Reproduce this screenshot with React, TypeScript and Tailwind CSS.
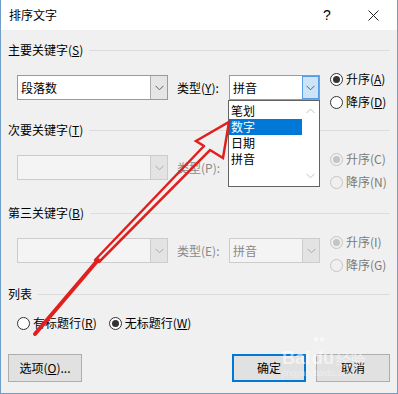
import React from 'react';

type Cbx = 'normal' | 'focus' | 'disabled';

function Chevron({ color }: { color: string }) {
  return (
    <svg width="9" height="6" viewBox="0 0 9 6">
      <path d="M0.5 0.8 L4.5 4.8 L8.5 0.8" fill="none" stroke={color} strokeWidth="1" />
    </svg>
  );
}

function Combo({ width, text, state = 'normal' }: { width: string; text?: string; state?: Cbx }) {
  const disabled = state === 'disabled';
  return (
    <div
      className={`flex h-[25px] border ${width} ${
        disabled ? 'border-[#cccccc] bg-[#f4f4f4]' : 'border-[#9a9a9a] bg-white'
      }`}
    >
      <div className={`flex-1 flex items-center pl-[3px] ${disabled ? 'text-[#8a8a8a]' : 'text-black'}`}>
        {text}
      </div>
      <div
        className={`w-[17px] flex items-center justify-center border-l ${
          state === 'focus'
            ? 'bg-[#cce4f7] border border-[#569de5]'
            : disabled
            ? 'bg-[#e3e3e3] border-[#cccccc]'
            : 'bg-[#e5e5e5] border-[#adadad]'
        }`}
      >
        <Chevron color={disabled ? '#a8a8a8' : '#606060'} />
      </div>
    </div>
  );
}

function Radio({ checked, disabled, children }: { checked?: boolean; disabled?: boolean; children: React.ReactNode }) {
  return (
    <div className={`flex items-center h-4 gap-[3px] ${disabled ? 'text-[#7a7a7a]' : 'text-black'}`}>
      <span
        className={`w-[13px] h-[13px] rounded-full border flex items-center justify-center ${
          disabled ? 'border-[#c4c4c4] bg-[#f0f0f0]' : 'border-[#333333] bg-white'
        }`}
      >
        {checked && (
          <span className={`w-[7px] h-[7px] rounded-full ${disabled ? 'bg-[#c4c4c4]' : 'bg-[#333333]'}`} />
        )}
      </span>
      <span>{children}</span>
    </div>
  );
}

function Heading({ children }: { children: React.ReactNode }) {
  return (
    <div className="flex items-center h-4 gap-[6px]">
      <span className="whitespace-nowrap">{children}</span>
      <div className="flex-1 h-px bg-[#dcdcdc]" />
    </div>
  );
}

function KeyRow({
  text,
  label,
  type,
  typeState,
  disabled,
  up,
  down,
}: {
  text?: string;
  label: React.ReactNode;
  type?: string;
  typeState: Cbx;
  disabled?: boolean;
  up: React.ReactNode;
  down: React.ReactNode;
}) {
  return (
    <div className="flex h-[40px] mt-[12px]">
      <div className="ml-[9px] mt-[5px]">
        <Combo width="w-[151px]" text={text} state={disabled ? 'disabled' : 'normal'} />
      </div>
      <div
        className={`ml-[9px] mt-[5px] h-[25px] w-[52px] flex items-center whitespace-nowrap ${
          disabled ? 'text-[#8a8a8a]' : 'text-black'
        }`}
      >
        {label}
      </div>
      <div className="mt-[5px]">
        <Combo width="w-[91px]" text={type} state={typeState} />
      </div>
      <div className="ml-[10px] mt-[1px] flex flex-col gap-[7px]">
        <Radio checked disabled={disabled}>
          {up}
        </Radio>
        <Radio disabled={disabled}>{down}</Radio>
      </div>
    </div>
  );
}

function Btn({ children, primary, width }: { children: React.ReactNode; primary?: boolean; width: string }) {
  return (
    <div
      className={`h-[28px] ${width} flex items-center justify-center bg-[#e1e1e1] ${
        primary ? 'border-2 border-[#0078d7]' : 'border border-[#adadad]'
      }`}
    >
      {children}
    </div>
  );
}

export default function App() {
  return (
    <div className="relative w-[398px] h-[394px] overflow-hidden bg-[#f0f0f0] border-x border-b border-[#6f9ec6] font-['Microsoft_YaHei','Noto_Sans_CJK_SC',sans-serif] text-[12px] text-black leading-none">
      {/* title bar */}
      <div className="h-[30px] bg-white flex items-center pl-[8px]">
        <span className="flex-1">排序文字</span>
        <span className="text-[14px] w-[10px] mr-[35px] font-['Liberation_Sans',sans-serif]">?</span>
        <svg width="11" height="11" viewBox="0 0 11 11" className="mr-[18px]">
          <path d="M0.5 0.5 L10.5 10.5 M10.5 0.5 L0.5 10.5" stroke="#222" strokeWidth="1" />
        </svg>
      </div>

      <div className="pl-[7px] pr-[7px] pt-[12px]">
        <Heading>
          主要关键字(<span className="underline">S</span>)
        </Heading>
        <KeyRow
          text="段落数"
          label={
            <>
              类型(<span className="underline">Y</span>):
            </>
          }
          type="拼音"
          typeState="focus"
          up={
            <>
              升序(<span className="underline">A</span>)
            </>
          }
          down={
            <>
              降序(<span className="underline">D</span>)
            </>
          }
        />

        <div className="mt-[12px]">
          <Heading>
            次要关键字(<span className="underline">T</span>)
          </Heading>
        </div>
        <KeyRow
          disabled
          label="类型(P):"
          typeState="disabled"
          up="升序(C)"
          down="降序(N)"
        />

        <div className="mt-[15px]">
          <Heading>
            第三关键字(<span className="underline">B</span>)
          </Heading>
        </div>
        <KeyRow
          disabled
          label="类型(E):"
          type="拼音"
          typeState="disabled"
          up="升序(I)"
          down="降序(G)"
        />

        <div className="mt-[13px]">
          <Heading>列表</Heading>
        </div>
        <div className="flex mt-[13px] ml-[9px] gap-[12px]">
          <Radio>
            有标题行(<span className="underline">R</span>)
          </Radio>
          <Radio checked>
            无标题行(<span className="underline">W</span>)
          </Radio>
        </div>

        <div className="flex mt-[23px]">
          <Btn width="w-[74px]">
            选项(<span className="underline">O</span>)...
          </Btn>
          <div className="flex-1" />
          <Btn width="w-[74px]" primary>
            确定
          </Btn>
          <div className="ml-[10px]">
            <Btn width="w-[74px]">取消</Btn>
          </div>
        </div>
      </div>

      {/* open dropdown list */}
      <div className="absolute left-[227px] top-[100px] w-[92px] h-[87px] bg-white border border-[#646464] flex">
        <div className="flex-1 pt-[2px] flex flex-col">
          <div className="h-4 flex items-center pl-[2px]">笔划</div>
          <div className="h-4 flex items-center pl-[2px] bg-[#0078d7] text-white">数字</div>
          <div className="h-4 flex items-center pl-[2px]">日期</div>
          <div className="h-4 flex items-center pl-[2px]">拼音</div>
        </div>
        <div className="w-[17px] flex flex-col items-center justify-between py-[7px]">
          <svg width="9" height="6" viewBox="0 0 9 6">
            <path d="M0.5 5 L4.5 1 L8.5 5" fill="none" stroke="#c2c2c2" strokeWidth="1" />
          </svg>
          <Chevron color="#c2c2c2" />
        </div>
      </div>

      {/* watermark */}
      <div className="absolute left-[281px] top-[349px] text-white/55 pointer-events-none">
        <div className="flex items-end gap-[2px] text-[18px] font-bold font-['Liberation_Sans',sans-serif] leading-none">
          <span>Bai</span>
          <span className="relative">
            <span className="absolute -top-[12px] left-[2px] flex gap-[2px]">
              <span className="w-[4px] h-[5px] rounded-full bg-white/50" />
              <span className="w-[4px] h-[5px] rounded-full bg-white/50" />
            </span>
            du
          </span>
          <span className="text-[15px] font-normal">经验</span>
        </div>
        <div className="text-[9px] font-['Liberation_Sans',sans-serif] mt-[2px] text-white/45">jingyan.baidu.com</div>
      </div>

      {/* red annotation arrow */}
      <svg className="absolute left-0 top-0 pointer-events-none" width="398" height="394" viewBox="0 0 398 394">
        <g fill="none" stroke="#e0201e" strokeLinejoin="miter" strokeLinecap="round">
          <path
            d="M203 146 L195 141 L228 122 L222 158 L209 150 L98 262 M203 146 L94 260"
            strokeWidth="2.5"
          />
          <path d="M97 260 L34 334" strokeWidth="4" />
        </g>
      </svg>
    </div>
  );
}
